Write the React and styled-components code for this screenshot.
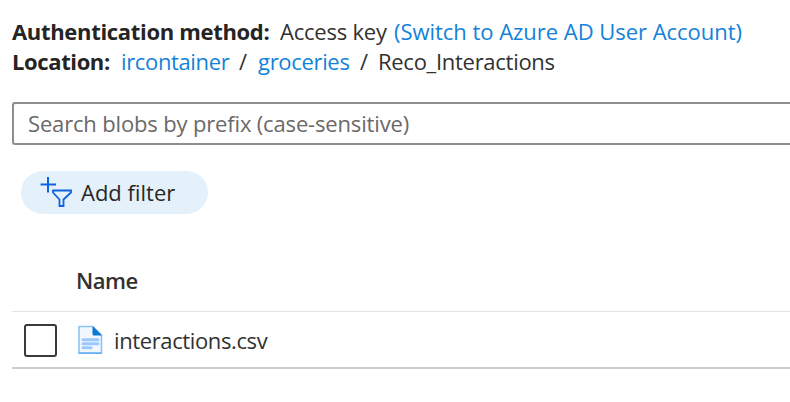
import React from "react";
import styled, { createGlobalStyle } from "styled-components";

const GlobalStyle = createGlobalStyle`
  body {
    margin: 0;
    background: #fff;
    color: #323130;
    font-family: "Open Sans", "Noto Sans", sans-serif;
    font-size: 22px;
    overflow: hidden;
  }
`;

const Page = styled.main`
  box-sizing: border-box;
  width: 100%;
  height: 402px;
  padding: 17px 0 0 12px;
  overflow: hidden;
`;

const InfoRow = styled.div`
  display: flex;
  height: 30px;
  line-height: 29px;
  white-space: pre;
`;

const Segment = styled.span`
  flex: none;
  width: ${(p) => p.$width}px;
  letter-spacing: ${(p) => p.$track || 0}px;
`;

const Label = styled(Segment)`
  font-weight: 700;
  color: #252423;
`;

const Link = styled(Segment).attrs({ as: "a" })`
  color: #1382d8;
  text-decoration: none;
`;

const SearchBox = styled.div`
  box-sizing: border-box;
  height: 43px;
  margin-top: 25px;
  padding-left: 14px;
  border: 2px solid #8f8e8d;
  border-right: 0;
  border-radius: 3px 0 0 3px;
  line-height: 38px;
  color: #6b6968;
  white-space: nowrap;
  letter-spacing: -0.16px;
`;

const FilterButton = styled.button`
  display: flex;
  align-items: center;
  box-sizing: border-box;
  width: 187px;
  height: 43px;
  margin: 26px 0 0 9px;
  padding: 0 0 1px 18px;
  gap: 8px;
  border: 0;
  border-radius: 22px;
  background: #e5f1fa;
  color: #292827;
  font: inherit;
  white-space: nowrap;
  letter-spacing: 0;
`;

const Table = styled.section`
  margin-top: 37px;
`;

const HeaderRow = styled.div`
  height: 60px;
  padding-left: 64px;
  border-bottom: 1px solid #e4e4e4;
  line-height: 58px;
  font-weight: 600;
  letter-spacing: -0.5px;
`;

const FileRow = styled.div`
  display: flex;
  align-items: center;
  height: 55px;
  padding-left: 12px;
  border-bottom: 2px solid #cccccc;
  letter-spacing: -0.38px;
`;

const Checkbox = styled.span`
  box-sizing: border-box;
  width: 33px;
  height: 33px;
  margin: 2px 20px 0 0;
  border: 2px solid #3b3a39;
  border-radius: 3px;
`;

const FileName = styled.span`
  margin-left: 11px;
  line-height: 30px;
`;

const FilterIcon = () => (
  <svg width="34" height="30" viewBox="0 0 34 30" fill="none" stroke="#0f62e0" strokeWidth="2">
    <path d="M1.5 7.5H17M9 -0.5V15.5" />
    <path d="M14 13.5H32V15.5L24.5 22.5V29H20.5V22.5L14 15.5Z" strokeWidth="1.8" />
  </svg>
);

const FileIcon = () => (
  <svg width="26" height="30" viewBox="0 0 26 30">
    <path d="M2 1.5H16L24.5 10V28H2Z" fill="#f0f7ff" stroke="#8fc2f7" strokeWidth="1.6" strokeLinejoin="round" />
    <path d="M1.5 28.2H25" stroke="#68b1ef" strokeWidth="1.6" />
    <path d="M15.5 1L25 10.5H17Q15.5 10.5 15.5 9Z" fill="#0b78d3" />
    <path d="M6 14.8H21M6 18.8H21M6 22.8H14" stroke="#9cc9fb" strokeWidth="3" strokeLinecap="round" />
  </svg>
);

export default function App() {
  return (
    <>
      <GlobalStyle />
      <Page>
        <InfoRow>
          <Label $width={268} $track={-0.32}>Authentication method:</Label>
          <Segment $width={114} $track={-0.22}>Access key</Segment>
          <Link $width={380} $track={-0.03}>(Switch to Azure AD User Account)</Link>
        </InfoRow>
        <InfoRow>
          <Label $width={109} $track={-0.38}>Location:</Label>
          <Link $width={118} $track={-0.36}>ircontainer</Link>
          <Segment $width={19}>/</Segment>
          <Link $width={102} $track={-0.32}>groceries</Link>
          <Segment $width={18}>/</Segment>
          <Segment $width={200} $track={-0.28}>Reco_Interactions</Segment>
        </InfoRow>
        <SearchBox>Search blobs by prefix (case-sensitive)</SearchBox>
        <FilterButton type="button">
          <FilterIcon />
          Add filter
        </FilterButton>
        <Table>
          <HeaderRow>Name</HeaderRow>
          <FileRow>
            <Checkbox role="checkbox" aria-checked="false" />
            <FileIcon />
            <FileName>interactions.csv</FileName>
          </FileRow>
        </Table>
      </Page>
    </>
  );
}
